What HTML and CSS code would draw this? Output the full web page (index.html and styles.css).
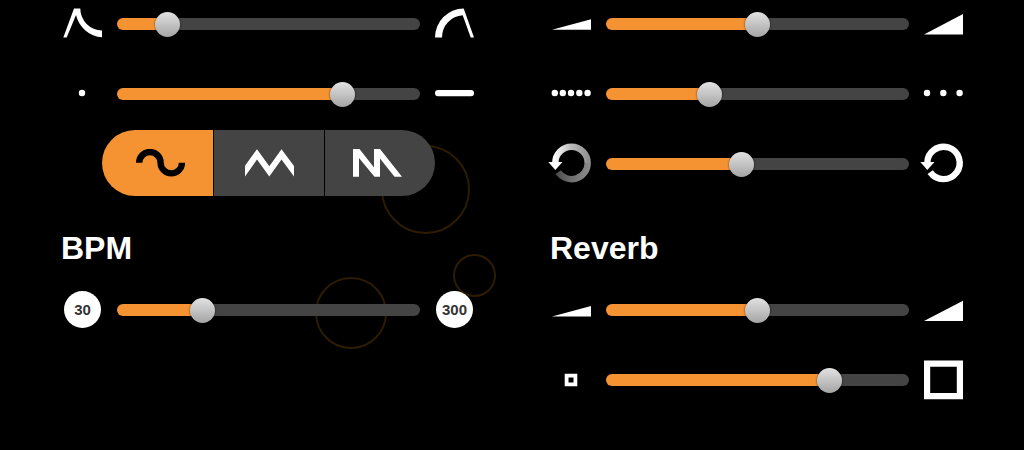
FILE: index.html
```html
<!DOCTYPE html>
<html lang="en">
<head>
<meta charset="utf-8">
<title>Synth controls</title>
<link rel="stylesheet" href="styles.css">
</head>
<body>
<div class="bubbles" aria-hidden="true">
  <span class="bubble bubble-large"></span>
  <span class="bubble bubble-medium"></span>
  <span class="bubble bubble-small"></span>
</div>
<main class="panel">
  <div class="column">
    <section class="group">
      <div class="row">
        <svg class="icon" viewBox="0 0 39 40"><path d="M0.3 33.5L11 4.5H17.3A22 22 0 0 0 39 26.5V33.3A29 29 0 0 1 13 11L3.7 33.5Z"/></svg>
        <input class="slider" type="range" step="0.1" value="13.6" style="--v:0.136" aria-label="Envelope">
        <svg class="icon" viewBox="0 0 39 40"><path d="M0 33.5A29 29 0 0 1 28.7 4.5L39 33.5H35.7L27.7 11.3A22 22 0 0 0 7 33.5Z"/></svg>
      </div>
      <div class="row">
        <svg class="icon" viewBox="0 0 39 40"><circle cx="19" cy="19" r="3.2"/></svg>
        <input class="slider" type="range" step="0.1" value="76.5" style="--v:0.765" aria-label="Note length">
        <svg class="icon" viewBox="0 0 39 40"><rect x="0" y="16" width="39" height="6.3" rx="3"/></svg>
      </div>
      <div class="row row-waves">
        <div class="waves" role="group" aria-label="Waveform">
          <button class="wave wave-first" type="button" aria-pressed="true" aria-label="Sine">
            <svg class="wave-icon" viewBox="0 0 49 28"><path class="line" d="M3.2 13.7A10.7 10.7 0 0 1 24.6 13.7A10.7 10.7 0 0 0 46 13.7"/></svg>
          </button>
          <button class="wave wave-middle" type="button" aria-pressed="false" aria-label="Triangle">
            <svg class="wave-icon" viewBox="0 0 49 28"><path d="M0 16.7L12 0.2L24.3 17.2L36.5 0.2L49 17V27.5L36.5 10.5L24.3 27.5L12 10.5L0 27.5Z"/></svg>
          </button>
          <button class="wave wave-last" type="button" aria-pressed="false" aria-label="Sawtooth">
            <svg class="wave-icon" viewBox="0 0 49 28"><path d="M0 0H6.5L21 18.5V0H27L49 27.7H41.5L27 9.5V27.7H21.5L6 9V27.7H0Z"/></svg>
          </button>
        </div>
      </div>
    </section>
    <section class="group">
      <h2 class="title">BPM</h2>
      <div class="row">
        <span class="badge">30</span>
        <input class="slider" type="range" step="0.1" value="26.2" style="--v:0.262" aria-label="BPM">
        <span class="badge">300</span>
      </div>
    </section>
  </div>

  <div class="column">
    <section class="group">
      <div class="row">
        <svg class="icon" viewBox="0 0 39 40"><path d="M0 25.8L39 15.3V25.8Z"/></svg>
        <input class="slider" type="range" step="0.1" value="50" style="--v:0.5" aria-label="Delay level">
        <svg class="icon" viewBox="0 0 39 40"><path d="M0 30.4L39 10V30.4Z"/></svg>
      </div>
      <div class="row">
        <svg class="icon" viewBox="0 0 39 40"><circle cx="2.8" cy="19" r="3.2"/><circle cx="10.8" cy="19" r="3.2"/><circle cx="19" cy="19" r="3.2"/><circle cx="27.3" cy="19" r="3.2"/><circle cx="35.6" cy="19" r="3.2"/></svg>
        <input class="slider" type="range" step="0.1" value="32.6" style="--v:0.326" aria-label="Delay time">
        <svg class="icon" viewBox="0 0 39 40"><circle cx="3" cy="19" r="3.2"/><circle cx="19.3" cy="19" r="3.2"/><circle cx="35.6" cy="19" r="3.2"/></svg>
      </div>
      <div class="row">
        <svg class="icon" viewBox="0 0 39 40">
          <defs>
            <linearGradient id="fade-top" gradientUnits="userSpaceOnUse" x1="2" y1="0" x2="38" y2="0"><stop offset="0" stop-color="#fff"/><stop offset="0.5" stop-color="#b8b8b8"/><stop offset="1" stop-color="#8c8c8c"/></linearGradient>
            <linearGradient id="fade-bottom" gradientUnits="userSpaceOnUse" x1="2" y1="0" x2="38" y2="0"><stop offset="0" stop-color="#484848"/><stop offset="0.5" stop-color="#707070"/><stop offset="1" stop-color="#8c8c8c"/></linearGradient>
          </defs>
          <path class="line" stroke="url(#fade-bottom)" d="M35.7 18.7A16.2 16.2 0 0 1 6.2 28.2"/>
          <path class="line" stroke="url(#fade-top)" d="M3.3 18.9A16.2 16.2 0 0 1 35.7 18.9"/>
          <path d="M-3.7 18H10.5L3.3 25.9Z"/>
        </svg>
        <input class="slider" type="range" step="0.1" value="44.2" style="--v:0.442" aria-label="Delay feedback">
        <svg class="icon" viewBox="0 0 39 40"><path class="line" stroke="#fff" d="M3.3 18.9A16.2 16.2 0 1 1 6.2 28.2"/><path d="M-3.7 18H10.5L3.3 25.9Z"/></svg>
      </div>
    </section>
    <section class="group">
      <h2 class="title">Reverb</h2>
      <div class="row">
        <svg class="icon" viewBox="0 0 39 40"><path d="M0 26.4L39 16V26.4Z"/></svg>
        <input class="slider" type="range" step="0.1" value="50" style="--v:0.5" aria-label="Reverb level">
        <svg class="icon" viewBox="0 0 39 40"><path d="M0 31L39 10.8V31Z"/></svg>
      </div>
      <div class="row">
        <svg class="icon" viewBox="0 0 39 40"><path fill-rule="evenodd" d="M12.7 13.7H25.3V26.3H12.7ZM16.5 17.5V22.5H21.5V17.5Z"/></svg>
        <input class="slider" type="range" step="0.1" value="76" style="--v:0.76" aria-label="Room size">
        <svg class="icon" viewBox="0 0 39 40"><path fill-rule="evenodd" d="M0 0.4H39V39.2H0ZM6.2 6.7V33H32.8V6.7Z"/></svg>
      </div>
    </section>
  </div>
</main>
</body>
</html>
```

FILE: styles.css
```css
:root {
  --accent: #f59333;
  --track: #444;
}

* {
  box-sizing: border-box;
}

body {
  margin: 0;
  background: #000;
  color: #fff;
  font-family: "Liberation Sans", Arial, sans-serif;
}

.panel {
  position: relative;
  display: grid;
  grid-template-columns: 1fr 1fr;
  column-gap: 75px;
  margin-top: -11px;
  padding: 0 61px 0 60px;
}

.row {
  display: flex;
  align-items: center;
  gap: 15px;
  min-height: 70px;
  padding-left: 3px;
}

.row-waves {
  justify-content: center;
  padding-bottom: 2px;
}

.title {
  margin: 0;
  padding: 22px 0 0 1px;
  font-size: 32px;
  line-height: 54px;
  font-weight: 700;
}

.icon {
  flex: none;
  width: 39px;
  height: 40px;
  overflow: visible;
  fill: #fff;
}

.line {
  fill: none;
  stroke-width: 6.4;
}

.badge {
  flex: none;
  width: 37px;
  height: 37px;
  margin: 0 1px 2px;
  border-radius: 50%;
  background: #fff;
  color: #333;
  font-size: 15px;
  line-height: 37px;
  font-weight: 700;
  text-align: center;
}

.slider {
  -webkit-appearance: none;
  appearance: none;
  flex: 1;
  min-width: 0;
  height: 12px;
  margin: 0;
  border-radius: 6px;
  background: linear-gradient(to right,
    var(--accent) calc(12px + (100% - 25px) * var(--v)),
    var(--track) calc(12px + (100% - 25px) * var(--v)));
}

.slider::-webkit-slider-runnable-track {
  height: 12px;
}

.slider::-webkit-slider-thumb {
  -webkit-appearance: none;
  width: 25px;
  height: 25px;
  margin-top: -6px;
  border-radius: 50%;
  background: linear-gradient(#e2e2e2, #a4a4a4);
  box-shadow: 0 0 2px rgba(0, 0, 0, 0.8);
}

.waves {
  display: grid;
  grid-template-columns: 111px 110px 1fr;
  gap: 1px;
  width: 333px;
  height: 66px;
  border-radius: 33px;
  overflow: hidden;
}

.wave {
  display: flex;
  align-items: center;
  justify-content: center;
  border: 0;
  padding: 0;
  background: var(--track);
  color: #fff;
}

.wave[aria-pressed="true"] {
  background: var(--accent);
  color: #000;
}

.wave-first {
  padding-left: 6px;
}

.wave-last {
  padding-right: 6px;
}

.wave-icon {
  width: 49px;
  height: 28px;
  fill: currentColor;
}

.wave-icon .line {
  fill: none;
  stroke: currentColor;
}

.bubble {
  position: absolute;
  border: 2px solid #2d1b02;
  border-radius: 50%;
}

.bubble-large {
  left: 381px;
  top: 145px;
  width: 89px;
  height: 89px;
}

.bubble-medium {
  left: 315px;
  top: 277px;
  width: 72px;
  height: 72px;
}

.bubble-small {
  left: 453px;
  top: 254px;
  width: 43px;
  height: 43px;
}
```
